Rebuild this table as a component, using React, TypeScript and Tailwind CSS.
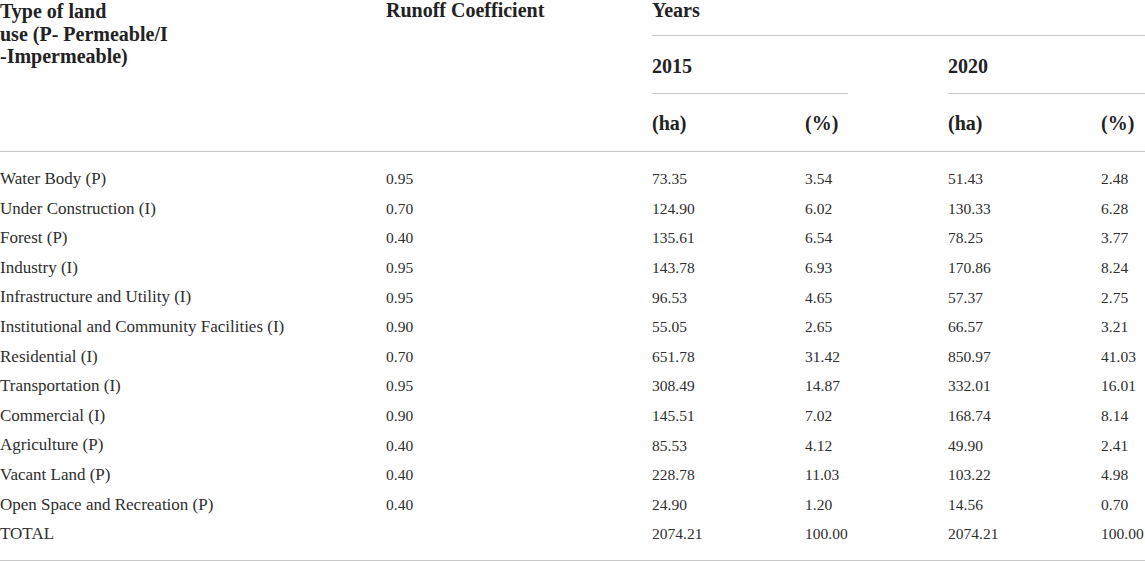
import React from 'react'

type Row = {
  name: string
  coef: string
  ha15: string
  pct15: string
  ha20: string
  pct20: string
}

const rows: Row[] = [
  { name: 'Water Body (P)', coef: '0.95', ha15: '73.35', pct15: '3.54', ha20: '51.43', pct20: '2.48' },
  { name: 'Under Construction (I)', coef: '0.70', ha15: '124.90', pct15: '6.02', ha20: '130.33', pct20: '6.28' },
  { name: 'Forest (P)', coef: '0.40', ha15: '135.61', pct15: '6.54', ha20: '78.25', pct20: '3.77' },
  { name: 'Industry (I)', coef: '0.95', ha15: '143.78', pct15: '6.93', ha20: '170.86', pct20: '8.24' },
  { name: 'Infrastructure and Utility (I)', coef: '0.95', ha15: '96.53', pct15: '4.65', ha20: '57.37', pct20: '2.75' },
  { name: 'Institutional and Community Facilities (I)', coef: '0.90', ha15: '55.05', pct15: '2.65', ha20: '66.57', pct20: '3.21' },
  { name: 'Residential (I)', coef: '0.70', ha15: '651.78', pct15: '31.42', ha20: '850.97', pct20: '41.03' },
  { name: 'Transportation (I)', coef: '0.95', ha15: '308.49', pct15: '14.87', ha20: '332.01', pct20: '16.01' },
  { name: 'Commercial (I)', coef: '0.90', ha15: '145.51', pct15: '7.02', ha20: '168.74', pct20: '8.14' },
  { name: 'Agriculture (P)', coef: '0.40', ha15: '85.53', pct15: '4.12', ha20: '49.90', pct20: '2.41' },
  { name: 'Vacant Land (P)', coef: '0.40', ha15: '228.78', pct15: '11.03', ha20: '103.22', pct20: '4.98' },
  { name: 'Open Space and Recreation (P)', coef: '0.40', ha15: '24.90', pct15: '1.20', ha20: '14.56', pct20: '0.70' },
  { name: 'TOTAL', coef: '', ha15: '2074.21', pct15: '100.00', ha20: '2074.21', pct20: '100.00' },
]

// columns: land use | runoff | 2015 ha | 2015 % | 2020 ha | 2020 %
const cols = 'grid grid-cols-[386px_266px_153px_143px_153px_1fr]'

const Num = ({ children }: { children: React.ReactNode }) => (
  <div className="text-[15.5px] whitespace-nowrap">{children}</div>
)

const App = () => {
  return (
    <div className="w-[1145px] h-[561px] bg-white overflow-hidden text-[#2e2e2e] font-['Liberation_Serif','Times_New_Roman',serif]">
      {/* header */}
      <div className={`${cols} border-b border-[#c8c8c8] font-bold text-[20px] text-[#222]`}>
        <div className="row-span-3 leading-[22.5px]">
          Type of land
          <br />
          use (P- Permeable/I
          <br />
          -Impermeable)
        </div>
        <div className="row-span-3 leading-[21px]">Runoff Coefficient</div>
        <div className="col-span-4 h-[36px] border-b border-[#c8c8c8]">
          <div className="leading-[21px]">Years</div>
        </div>

        <div className="col-span-2 pr-[100px]">
          <div className="h-[58px] pt-[20px] leading-[21px] border-b border-[#c8c8c8]">2015</div>
        </div>
        <div className="col-span-2">
          <div className="h-[58px] pt-[20px] leading-[21px] border-b border-[#c8c8c8]">2020</div>
        </div>

        <div className="h-[57px] pt-[19px] leading-[21px]">(ha)</div>
        <div className="h-[57px] pt-[19px] leading-[21px]">(%)</div>
        <div className="h-[57px] pt-[19px] leading-[21px]">(ha)</div>
        <div className="h-[57px] pt-[19px] leading-[21px]">(%)</div>
      </div>

      {/* body */}
      <div className="pt-[12px] pb-[11px] border-b border-[#c8c8c8]">
        {rows.map((r) => (
          <div key={r.name} className={`${cols} h-[29.6px] items-center`}>
            <div className="text-[17px] whitespace-nowrap">{r.name}</div>
            <Num>{r.coef}</Num>
            <Num>{r.ha15}</Num>
            <Num>{r.pct15}</Num>
            <Num>{r.ha20}</Num>
            <Num>{r.pct20}</Num>
          </div>
        ))}
      </div>
    </div>
  )
}

export default App
